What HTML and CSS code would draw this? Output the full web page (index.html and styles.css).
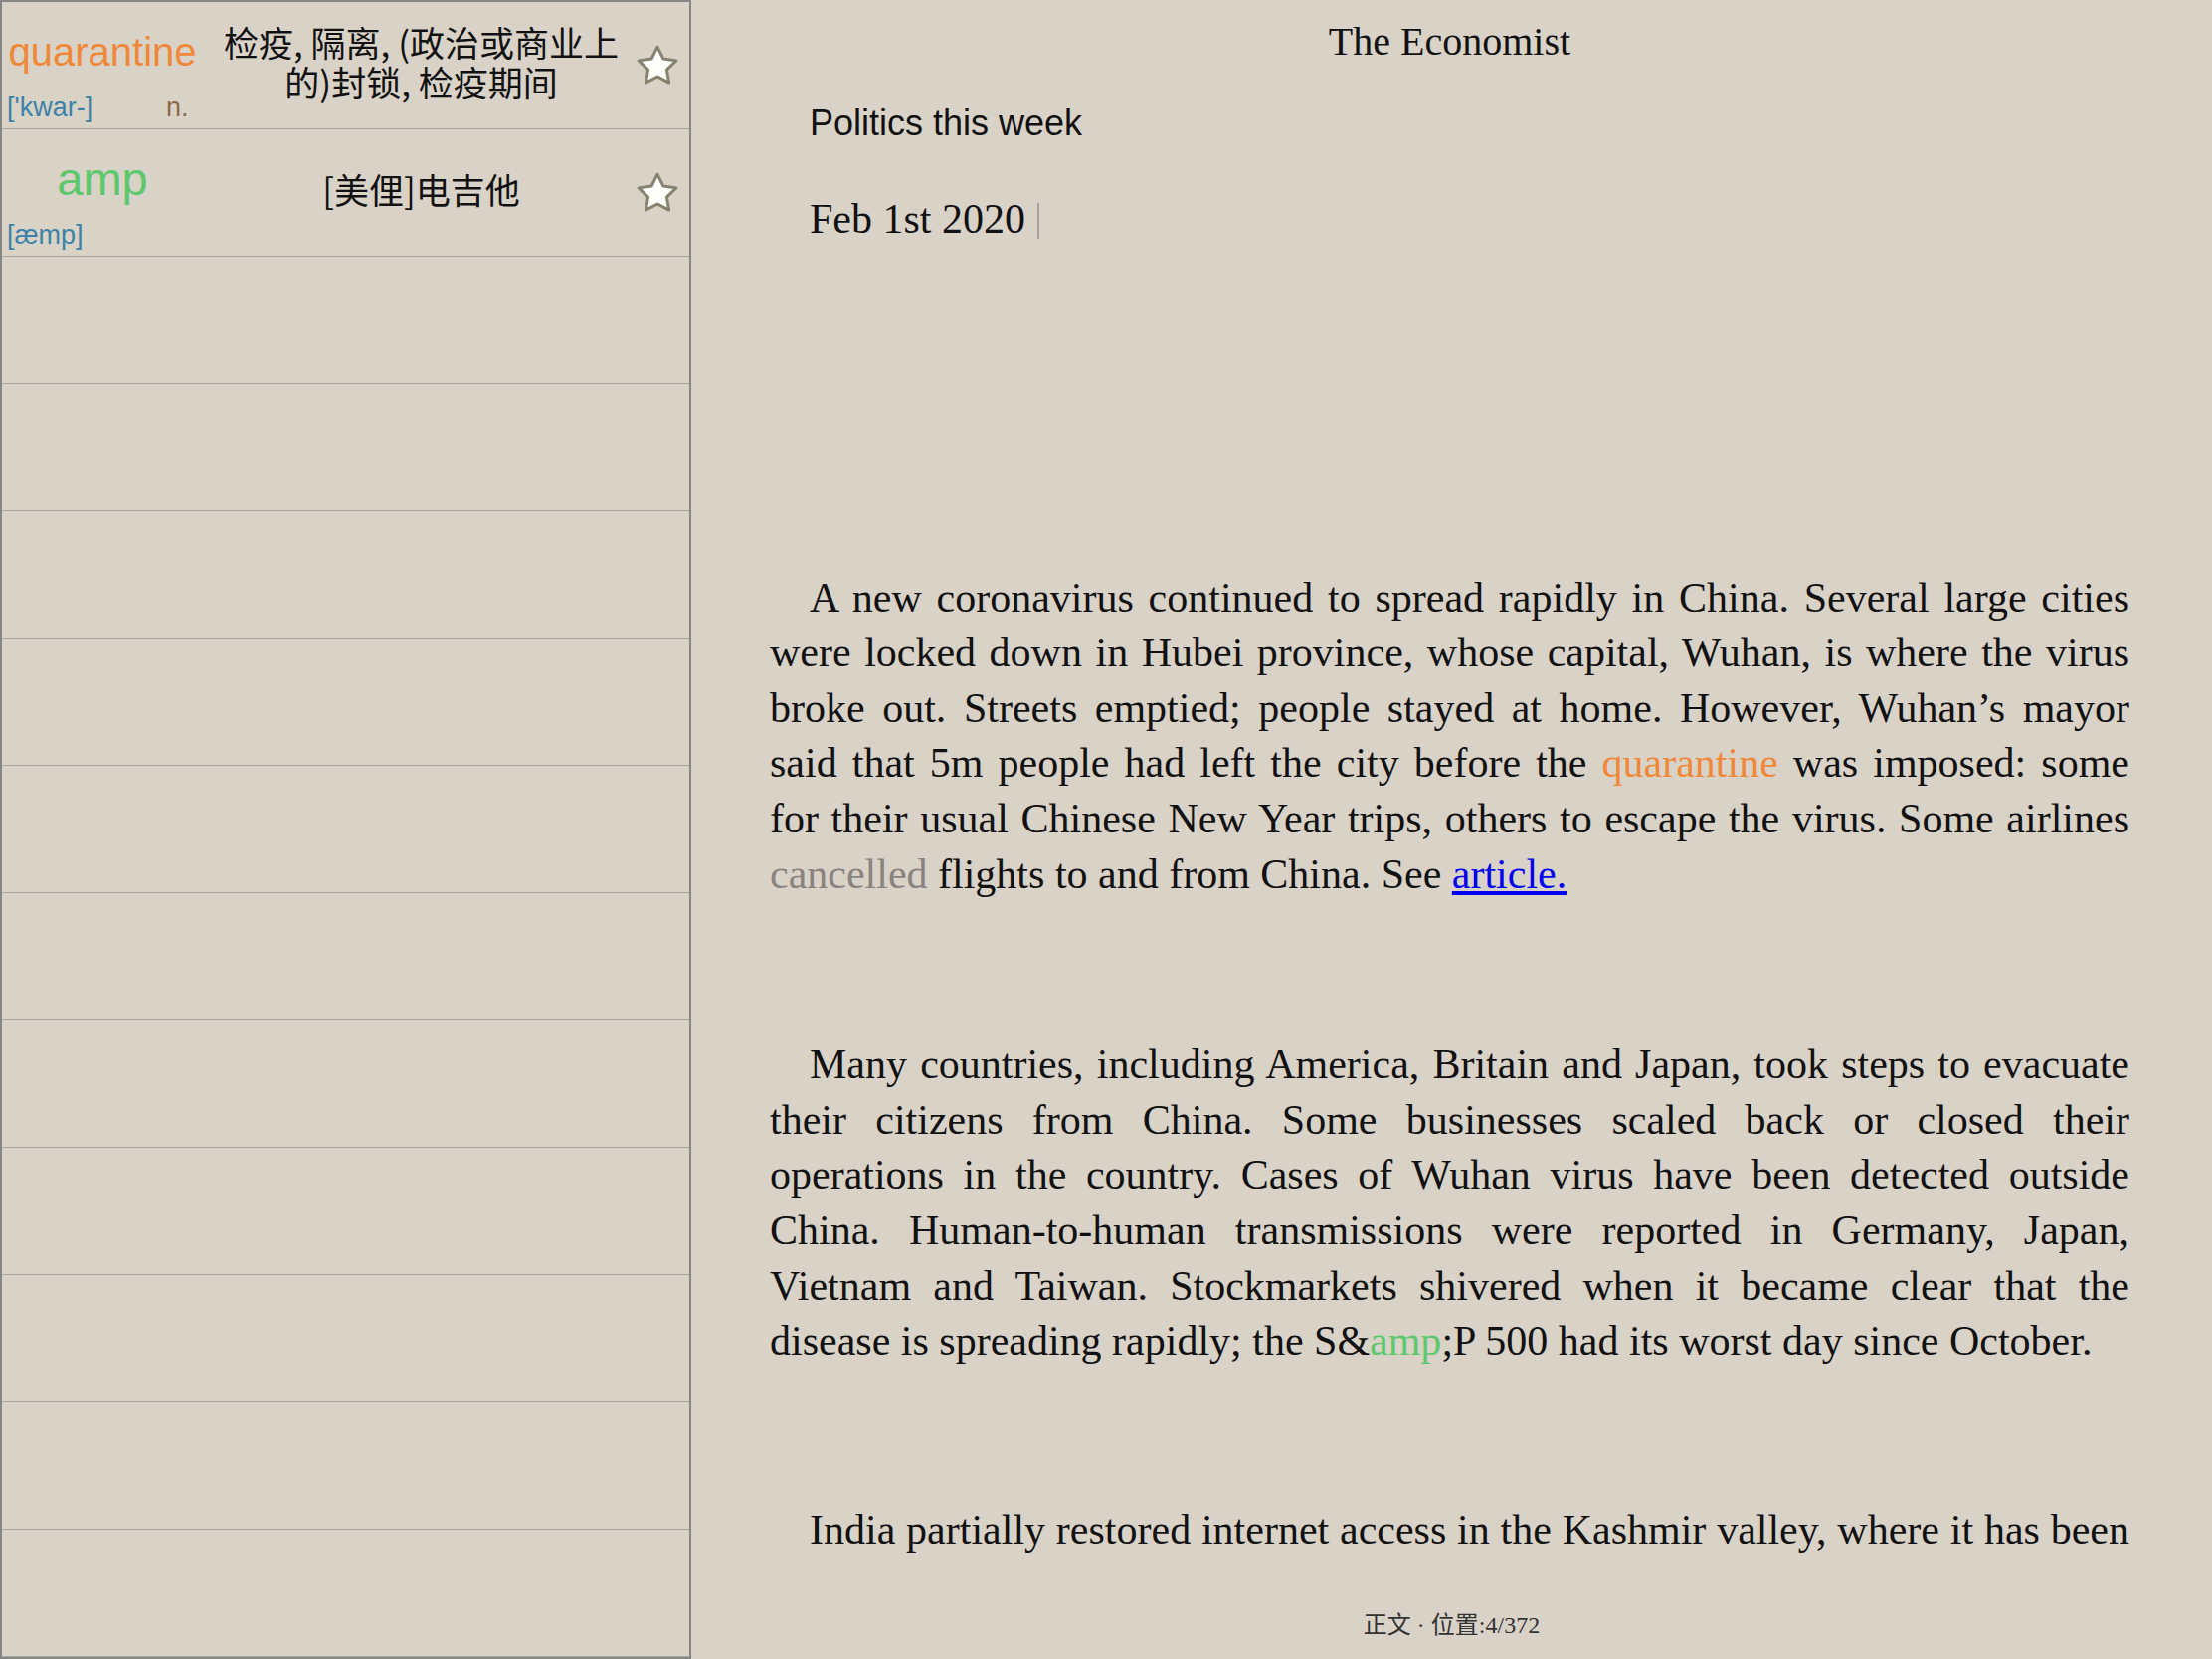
FILE: index.html
```html
<!DOCTYPE html>
<html lang="zh">
<head>
<meta charset="utf-8">
<title>The Economist</title>
<link rel="stylesheet" href="styles.css">
</head>
<body>
<div class="app">
  <aside class="wordlist">
    <div class="entry">
      <div class="head">
        <div class="word word-orange" style="font-size:40px">quarantine</div>
        <div class="meta"><span class="phon">['kwar-]</span><span class="pos">n.</span></div>
      </div>
      <div class="def">检疫, 隔离, (政治或商业上的)封锁, 检疫期间</div>
      <div class="star"><svg viewBox="0 0 44 44" width="46" height="46"><path d="M22 4 L27.6 15.3 L40.1 17.1 L31 25.9 L33.2 38.4 L22 32.5 L10.8 38.4 L13 25.9 L3.9 17.1 L16.4 15.3 Z"/></svg></div>
    </div>
    <div class="entry">
      <div class="head">
        <div class="word word-green" style="font-size:47px">amp</div>
        <div class="meta"><span class="phon">[æmp]</span></div>
      </div>
      <div class="def">[美俚]电吉他</div>
      <div class="star"><svg viewBox="0 0 44 44" width="46" height="46"><path d="M22 4 L27.6 15.3 L40.1 17.1 L31 25.9 L33.2 38.4 L22 32.5 L10.8 38.4 L13 25.9 L3.9 17.1 L16.4 15.3 Z"/></svg></div>
    </div>
    <div class="entry"></div>
    <div class="entry"></div>
    <div class="entry"></div>
    <div class="entry"></div>
    <div class="entry"></div>
    <div class="entry"></div>
    <div class="entry"></div>
    <div class="entry"></div>
    <div class="entry"></div>
    <div class="entry"></div>
    <div class="entry"></div>
  </aside>
  <main class="reader">
    <div class="page">
      <h1 class="book-title">The Economist</h1>
      <p class="section">Politics this week</p>
      <p class="date">Feb 1st 2020<span class="caret"></span></p>
      <p class="para">
        <span class="ln">A new coronavirus continued to spread rapidly in China. Several large cities</span>
        <span class="ln">were locked down in Hubei province, whose capital, Wuhan, is where the virus</span>
        <span class="ln">broke out. Streets emptied; people stayed at home. However, Wuhan’s mayor</span>
        <span class="ln">said that 5m people had left the city before the <span class="hl-orange">quarantine</span> was imposed: some</span>
        <span class="ln">for their usual Chinese New Year trips, others to escape the virus. Some airlines</span>
        <span class="ln"><span class="muted">cancelled</span> flights to and from China. See <a class="link" href="#">article.</a></span>
      </p>
      <p class="para">
        <span class="ln">Many countries, including America, Britain and Japan, took steps to evacuate</span>
        <span class="ln">their citizens from China. Some businesses scaled back or closed their</span>
        <span class="ln">operations in the country. Cases of Wuhan virus have been detected outside</span>
        <span class="ln">China. Human-to-human transmissions were reported in Germany, Japan,</span>
        <span class="ln">Vietnam and Taiwan. Stockmarkets shivered when it became clear that the</span>
        <span class="ln">disease is spreading rapidly; the S&amp;<span class="hl-green">amp</span>;P 500 had its worst day since October.</span>
      </p>
      <p class="para">
        <span class="ln ln-full">India partially restored internet access in the Kashmir valley, where it has been</span>
      </p>
    </div>
    <footer class="status">正文 · 位置:4/372</footer>
  </main>
</div>
</body>
</html>
```
FILE: styles.css
```css
html, body {
  margin: 0;
  padding: 0;
  background: #d8d2c7;
}

.app {
  display: flex;
  width: 2224px;
  height: 1668px;
  overflow: hidden;
  background: #d8d2c7;
}

/* ---------- word list ---------- */
.wordlist {
  box-sizing: border-box;
  width: 695px;
  height: 1668px;
  flex: none;
  border: 2px solid #868684;
  display: flex;
  flex-direction: column;
}

.entry {
  box-sizing: border-box;
  height: 128px;
  flex: none;
  border-bottom: 1px solid #a9a8a3;
  display: flex;
  align-items: stretch;
}

.head {
  width: 202px;
  flex: none;
  display: flex;
  flex-direction: column;
  font-family: "Liberation Sans", Arial, sans-serif;
}

.word {
  text-align: center;
  line-height: 48px;
  margin-top: 26px;
  white-space: nowrap;
}

.word-orange { color: #f0883a; }
.word-green { color: #5dc86c; }

.meta {
  display: flex;
  margin-top: 17px;
  padding-left: 5px;
  font-size: 27px;
  line-height: 30px;
}

.phon {
  width: 160px;
  color: #3d82a6;
}

.pos {
  color: #8c6a45;
}

.def {
  flex: 1;
  margin: 0 0 8px 14px;
  align-self: center;
  text-align: center;
  font-family: "Noto Sans CJK SC", "Liberation Sans", sans-serif;
  font-size: 35px;
  line-height: 40px;
  color: #111;
}

.star {
  width: 64px;
  flex: none;
  display: flex;
  align-items: center;
  justify-content: center;
}

.star svg path {
  fill: #fefefb;
  stroke: #84836d;
  stroke-width: 2.8;
  stroke-linejoin: round;
}

/* ---------- reader ---------- */
.reader {
  flex: 1;
  display: flex;
  flex-direction: column;
  height: 1668px;
}

.page {
  flex: 1;
  overflow: hidden;
  padding: 14px 83px 0 79px;
  font-family: "Liberation Serif", "Times New Roman", serif;
  color: #111;
}

.book-title {
  margin: 0;
  text-align: center;
  font-weight: normal;
  font-size: 40px;
  line-height: 56px;
}

.section {
  margin: 26px 0 0;
  text-indent: 40px;
  font-family: "Liberation Sans", Arial, sans-serif;
  font-size: 36px;
  line-height: 56px;
}

.date {
  margin: 41px 0 0;
  text-indent: 40px;
  font-size: 42px;
  line-height: 55.6px;
}

.caret {
  display: inline-block;
  width: 2px;
  height: 36px;
  margin-left: 12px;
  vertical-align: -6px;
  background: #a7a299;
}

.para {
  margin: 0;
  font-size: 42px;
  line-height: 55.6px;
}

.ln {
  display: block;
  text-align: justify;
  text-align-last: justify;
}

.ln:first-child {
  text-indent: 40px;
}

.ln:last-child {
  text-align-last: left;
}

.ln.ln-full {
  text-align-last: justify;
}

.date + .para {
  margin-top: 325px;
}

.para + .para {
  margin-top: 136px;
}

.para + .para + .para {
  margin-top: 134px;
}

.hl-orange { color: #f0883a; }
.hl-green { color: #5dc86c; }
.muted { color: #8a8480; }

.link {
  color: #0000ee;
  text-decoration: underline;
}

.status {
  height: 100px;
  flex: none;
  box-sizing: border-box;
  padding-top: 52px;
  text-align: center;
  font-family: "Liberation Serif", "Noto Sans CJK SC", serif;
  font-size: 24px;
  line-height: 28px;
  color: #333;
}
```
